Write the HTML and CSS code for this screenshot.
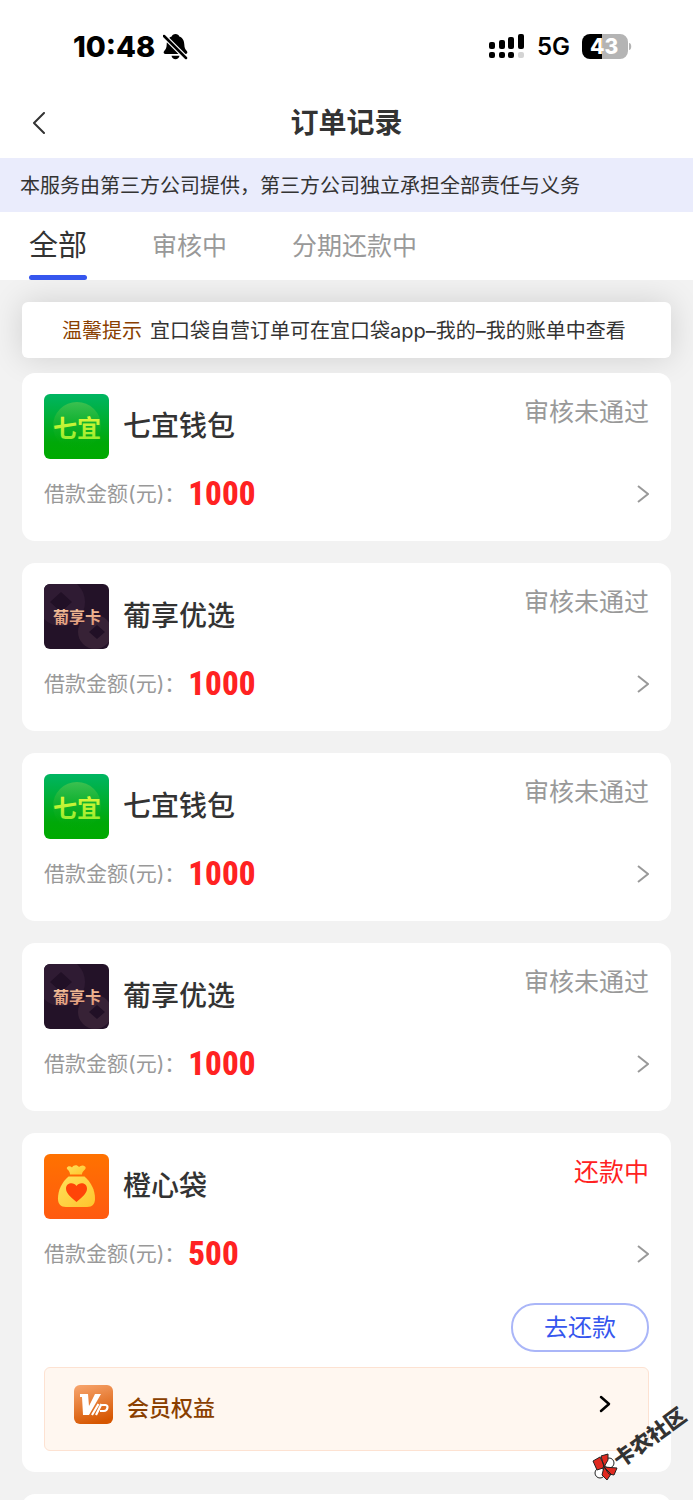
FILE: index.html
```
<!DOCTYPE html>
<html lang="zh-CN">
<head>
<meta charset="utf-8">
<meta name="viewport" content="width=device-width, initial-scale=1">
<title>订单记录</title>
<link rel="stylesheet" href="styles.css">
</head>
<body>
<svg class="defs" width="0" height="0" aria-hidden="true">
  <defs>
    <linearGradient id="green" x1="0" y1="0" x2="0" y2="1"><stop offset="0" stop-color="#00b562"/><stop offset=".75" stop-color="#00a808"/><stop offset="1" stop-color="#00aa00"/></linearGradient>
    <linearGradient id="halo" x1="0" y1="0" x2="0" y2="1"><stop offset="0" stop-color="#3cc050"/><stop offset="1" stop-color="#00a808" stop-opacity="0"/></linearGradient>
    <linearGradient id="lime" x1="0" y1="0" x2="0" y2="1"><stop offset="0" stop-color="#e4f83a"/><stop offset="1" stop-color="#8eea2e"/></linearGradient>
    <linearGradient id="copper" x1="0" y1="0" x2="0" y2="1"><stop offset="0" stop-color="#f6c49c"/><stop offset="1" stop-color="#dc9678"/></linearGradient>
    <linearGradient id="orange" x1="0" y1="0" x2="0" y2="1"><stop offset="0" stop-color="#ff7200"/><stop offset="1" stop-color="#ff5a10"/></linearGradient>
    <linearGradient id="gold" x1="0" y1="0" x2="1" y2="1"><stop offset="0" stop-color="#ffe05a"/><stop offset="1" stop-color="#ffc52c"/></linearGradient>
    <linearGradient id="vip" x1="0.2" y1="0" x2="0.5" y2="1"><stop offset="0" stop-color="#f6a26a"/><stop offset="1" stop-color="#d65600"/></linearGradient>
    <symbol id="logo-qiyi" viewBox="0 0 65 65">
      <rect width="65" height="65" fill="url(#green)"/>
      <circle cx="33" cy="32" r="24" fill="url(#halo)"/>
      <text x="9" y="43" font-size="24" font-weight="700" fill="url(#lime)">七宜</text>
    </symbol>
    <symbol id="logo-pu" viewBox="0 0 65 65">
      <rect width="65" height="65" fill="#231228"/>
      <circle cx="17" cy="18" r="24" fill="#2f1b33"/>
      <circle cx="51" cy="48" r="17" fill="#372236"/>
      <path d="M17 8l11 10-11 10L6 18zM53 41l8 7-8 7-8-7z" fill="#211026"/>
      <text x="9" y="39" font-size="16" font-weight="700" fill="url(#copper)">葡享卡</text>
    </symbol>
    <symbol id="logo-bag" viewBox="0 0 65 65">
      <rect width="65" height="65" fill="url(#orange)"/>
      <path d="M23 13.500c1.500-2 3.500-1.500 5 0 1.500-2.500 5-3 7-.5 1.500-1.500 4-2.500 6-.5 1.500 1.500 0 3-1 4-1.500 1.500-2 2.500-2 4H26c0-2-1-3.500-2-4.500-1-1-1.500-1.700-1-2.500z" fill="url(#gold)"/>
      <path d="M24.500 22.500h16C47 28 51 36 51 44.500c0 5.500-2.500 8.500-8 8.500H22c-5.500 0-8-3-8-8.500 0-8.500 4-16.500 10.500-22z" fill="url(#gold)"/>
      <path d="M32.500 48C26 42.500 22 39 22 34.500c0-5.500 7.500-7 10.500-2.500 3-4.500 10.500-3 10.500 2.500 0 4.500-4 8-10.500 13.500z" fill="#ff4408"/>
    </symbol>
    <symbol id="chevron" viewBox="0 0 12 18"><path d="M1 1l10 8-10 8" fill="none" stroke="currentColor" stroke-width="2"/></symbol>
  </defs>
</svg>
<div class="app">
  <div class="statusbar">
    <div class="clock">
      <span class="time">10:48</span>
      <svg width="25" height="26" viewBox="0 0 25 26" aria-label="静音">
        <path d="M12.500 0c2 0 3.400 1 3.800 2.600 3.700 1.400 4.900 4.400 5 8 .1 3.600 1 4.800 2.500 6.500 1.200 1.400.4 3-1.300 3H2.500c-1.700 0-2.500-1.600-1.300-3 1.500-1.700 2.400-2.900 2.500-6.500.1-3.600 1.300-6.600 5-8C9.100 1 10.500 0 12.500 0zM8.500 21.800h8c-.4 2-2 3.400-4 3.400s-3.600-1.400-4-3.400z"/>
        <path d="M0 1l24 24" stroke="#fff" stroke-width="5"/>
        <path d="M1 2l22 22" stroke="#000" stroke-width="2.500" stroke-linecap="round"/>
      </svg>
    </div>
    <div class="signals">
      <svg width="36" height="26" viewBox="0 0 36 26" aria-label="信号">
        <rect x="0" y="8" width="6" height="7" rx="2"/><rect x="10" y="6" width="6" height="9" rx="2"/><rect x="19" y="3" width="6" height="12" rx="2"/><rect x="29" y="0" width="6" height="15" rx="2"/>
        <rect x="0" y="18" width="6" height="6" rx="2"/><rect x="10" y="18" width="6" height="6" rx="2"/><rect x="19" y="18" width="6" height="6" rx="2"/><rect x="29" y="18" width="6" height="6" rx="2" fill="#d4d4d4"/>
      </svg>
      <span class="net">5G</span>
      <svg width="50" height="26" viewBox="0 0 50 26" aria-label="电量 43%">
        <path d="M20 0H8a8 8 0 0 0-8 8v9a8 8 0 0 0 8 8h12z"/>
        <path d="M20 0h18a8 8 0 0 1 8 8v9a8 8 0 0 1-8 8H20zM47 9c3 0 3 7 0 7z" fill="#b4b4b4"/>
        <text x="8" y="20" class="level">43</text>
      </svg>
    </div>
  </div>
  <header class="header">
    <button class="back" aria-label="返回"><svg width="14" height="22" viewBox="0 0 14 22"><path d="M12 1L2 11l10 10" fill="none" stroke="#333" stroke-width="2" stroke-linecap="round" stroke-linejoin="round"/></svg></button>
    <h1 class="title">订单记录</h1>
  </header>
  <p class="notice">本服务由第三方公司提供，第三方公司独立承担全部责任与义务</p>
  <nav class="tabs">
    <button class="tab tab-active">全部</button>
    <button class="tab">审核中</button>
    <button class="tab">分期还款中</button>
  </nav>
  <main class="content">
    <p class="tip"><span class="tip-label">温馨提示</span><span>宜口袋自营订单可在宜口袋app–我的–我的账单中查看</span></p>
    <div class="orders">
      <article class="card">
        <div class="head"><svg class="logo"><use href="#logo-qiyi"/></svg><h2 class="name">七宜钱包</h2><span class="state">审核未通过</span></div>
        <div class="row"><span class="label">借款金额(元)：</span><strong class="amount">1000</strong><svg class="more"><use href="#chevron"/></svg></div>
      </article>
      <article class="card">
        <div class="head"><svg class="logo"><use href="#logo-pu"/></svg><h2 class="name">葡享优选</h2><span class="state">审核未通过</span></div>
        <div class="row"><span class="label">借款金额(元)：</span><strong class="amount">1000</strong><svg class="more"><use href="#chevron"/></svg></div>
      </article>
      <article class="card">
        <div class="head"><svg class="logo"><use href="#logo-qiyi"/></svg><h2 class="name">七宜钱包</h2><span class="state">审核未通过</span></div>
        <div class="row"><span class="label">借款金额(元)：</span><strong class="amount">1000</strong><svg class="more"><use href="#chevron"/></svg></div>
      </article>
      <article class="card">
        <div class="head"><svg class="logo"><use href="#logo-pu"/></svg><h2 class="name">葡享优选</h2><span class="state">审核未通过</span></div>
        <div class="row"><span class="label">借款金额(元)：</span><strong class="amount">1000</strong><svg class="more"><use href="#chevron"/></svg></div>
      </article>
      <article class="card card-active">
        <div class="head"><svg class="logo"><use href="#logo-bag"/></svg><h2 class="name">橙心袋</h2><span class="state state-due">还款中</span></div>
        <div class="row"><span class="label">借款金额(元)：</span><strong class="amount">500</strong><svg class="more"><use href="#chevron"/></svg></div>
        <button class="repay">去还款</button>
        <a class="vip" href="#">
          <svg class="vip-icon" viewBox="0 0 39 39"><rect width="39" height="39" rx="6" fill="url(#vip)"/><path d="M6 9h8l1 12 6-12h6L15 30H9L8 12H6z" fill="#fff"/><path d="M24.500 19L18 30M27 20h4.500c3.500 0 2 6-1.500 6h-4M27.500 19L22 30" fill="none" stroke="#fff" stroke-width="2.200"/></svg>
          <span class="vip-text">会员权益</span>
          <svg class="vip-more" viewBox="0 0 12 18"><path d="M2 2l8 7-8 7" fill="none" stroke="#000" stroke-width="2.500" stroke-linecap="round" stroke-linejoin="round"/></svg>
        </a>
      </article>
      <article class="card"></article>
    </div>
  </main>
  <svg class="mark-icon" width="27" height="28" viewBox="0 0 27 28" aria-hidden="true">
    <g stroke="#222" stroke-width="1" stroke-linejoin="round">
      <circle cx="17" cy="10" r="5" fill="#fff"/><circle cx="8" cy="20" r="5" fill="#fff"/>
      <path d="M1 8l7-4 4 8-1 3-6 2zM9 3l7-2v6l-4 7zM12 14l13 1-3 7-5-1zM12 14l7 7-4 6-5-5z" fill="#e02a20"/>
    </g>
  </svg>
  <span class="mark-text">卡农社区</span>
</div>
</body>
</html>
```
FILE: styles.css
```
* { box-sizing: border-box; }
body, h1, h2, p { margin: 0; }
body {
  font-family: Inter, "Noto Sans CJK SC", sans-serif;
  color: #333;
  background: #f2f2f2;
}
button { font: inherit; color: inherit; background: none; border: 0; padding: 0; }
svg { display: block; flex: none; }
.defs { position: absolute; }
.app { position: relative; display: flex; flex-direction: column; height: 100vh; overflow: hidden; }

.statusbar { display: flex; justify-content: space-between; align-items: center; height: 88px; padding: 6px 61px 0 73px; background: #fff; color: #000; }
.clock, .signals { display: flex; align-items: center; }
.clock { gap: 8px; }
.time { font-size: 29px; line-height: 32px; font-weight: 800; }
.signals { gap: 12px; }
.net { font-size: 24px; line-height: 28px; font-weight: 600; }
.level { font-size: 21px; font-weight: 800; fill: #fff; }

.header { display: grid; grid-template-columns: 80px 1fr 80px; align-items: center; height: 70px; background: #fff; }
.back { display: flex; align-items: center; padding-left: 32px; height: 44px; }
.title { font-size: 28px; line-height: 40px; font-weight: 700; text-align: center; }

.notice { padding: 13px 20px 11px; font-size: 20px; line-height: 30px; background: #eaecfc; white-space: nowrap; }

.tabs { display: flex; gap: 65px; height: 68px; padding: 0 29px; background: #fff; }
.tab { padding-top: 5px; font-size: 25px; line-height: 36px; color: #999; border-bottom: 5px solid transparent; }
.tab-active { font-size: 29px; color: #333; position: relative; }
.tab-active::after { content: ""; position: absolute; left: 0; right: 0; bottom: -5px; height: 5px; border-radius: 3px; background: #3656ee; }

.content { flex: 1; min-height: 0; overflow: hidden; padding: 22px 22px 0; }
.tip { display: flex; gap: 8px; padding: 14px 10px 12px 40px; font-size: 20px; line-height: 30px; white-space: nowrap; background: #fff; border-radius: 6px; box-shadow: 0 0 32px rgba(0, 0, 0, .14); }
.tip-label { color: #8a3f00; }

.orders { position: relative; display: flex; flex-direction: column; gap: 22px; padding-top: 15px; }
.card { min-height: 168px; padding: 21px 22px 29px; background: #fff; border-radius: 13px; }
.card-active { display: flex; flex-direction: column; padding-bottom: 21px; }
.head { display: flex; height: 65px; }
.logo { width: 65px; height: 65px; border-radius: 6px; }
.name { flex: 1; padding-left: 14px; font-size: 28px; line-height: 65px; font-weight: 500; }
.state { font-size: 25px; line-height: 36px; color: #999; }
.state-due { color: #f22; }
.row { display: flex; align-items: center; gap: 3px; height: 36px; margin-top: 17px; }
.label { font-size: 21px; line-height: 36px; color: #999; }
.amount { flex: 1; font-family: "Roboto Condensed", Roboto, sans-serif; font-size: 33px; line-height: 36px; font-weight: 800; color: #f22; }
.more { width: 12px; height: 18px; color: #999; }
.repay { align-self: flex-end; width: 138px; height: 49px; margin-top: 31px; border: 2px solid #aab6f8; border-radius: 24px; font-size: 24px; line-height: 36px; color: #3656ee; }
.vip { display: flex; align-items: center; height: 84px; margin-top: 15px; padding: 0 37px 10px 29px; border: 1px solid #fde2d2; border-radius: 6px; background: #fff7f0; text-decoration: none; }
.vip-icon { width: 39px; height: 39px; }
.vip-text { flex: 1; padding: 8px 0 0 14px; font-size: 22px; line-height: 32px; font-weight: 500; color: #8a3f00; }
.vip-more { width: 12px; height: 18px; }

.mark-icon { position: absolute; right: 74px; bottom: 19px; }
.mark-text { position: absolute; right: 1px; bottom: 50px; transform: rotate(-36deg); font-size: 21px; line-height: 24px; font-weight: 900; }
```
